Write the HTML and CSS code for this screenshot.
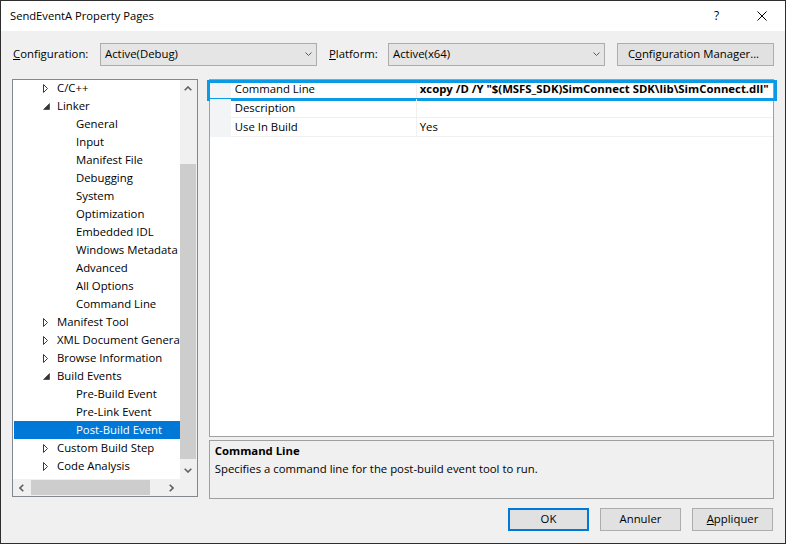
FILE: index.html
```html
<!DOCTYPE html>
<html>
<head>
<meta charset="utf-8">
<title>SendEventA Property Pages</title>
<link rel="stylesheet" href="styles.css">
</head>
<body>
<div class="window">
  <div class="titlebar">
    <span class="title">SendEventA Property Pages</span>
    <span class="tb-btn help">?</span>
    <span class="tb-btn"><svg width="10" height="10" viewBox="0 0 10 10"><path d="M0.5 0.5 L9.5 9.5 M9.5 0.5 L0.5 9.5" stroke="#000" stroke-width="1" fill="none"/></svg></span>
  </div>
  <div class="body">
    <div class="toolbar">
      <span class="lbl lbl-config"><u>C</u>onfiguration:</span>
      <div class="combo"><span>Active(Debug)</span><svg class="chev" width="7" height="4" viewBox="0 0 7 4"><polyline points="0.5,0.5 3.5,3.5 6.5,0.5" fill="none" stroke="#5a5a5a" stroke-width="1"/></svg></div>
      <span class="lbl lbl-platform"><u>P</u>latform:</span>
      <div class="combo"><span>Active(x64)</span><svg class="chev" width="7" height="4" viewBox="0 0 7 4"><polyline points="0.5,0.5 3.5,3.5 6.5,0.5" fill="none" stroke="#5a5a5a" stroke-width="1"/></svg></div>
      <button class="btn btn-cfg">C<u>o</u>nfiguration Manager...</button>
    </div>
    <div class="main">
      <div class="tree">
        <div class="tree-list">
          <div class="rows">
            <div class="trow l1"><span class="exp"><svg width="6" height="9" viewBox="0 0 6 9"><polygon points="0.5,0.5 4.5,4.5 0.5,8.5" fill="none" stroke="#3a3a3a" stroke-width="1"/></svg></span>C/C++</div>
            <div class="trow l1"><span class="exp"><svg width="7" height="7" viewBox="0 0 7 7"><polygon points="6.5,0.5 6.5,6.5 0.5,6.5" fill="#333" stroke="#333" stroke-width="0.6"/></svg></span>Linker</div>
            <div class="trow l2">General</div>
            <div class="trow l2">Input</div>
            <div class="trow l2">Manifest File</div>
            <div class="trow l2">Debugging</div>
            <div class="trow l2">System</div>
            <div class="trow l2">Optimization</div>
            <div class="trow l2">Embedded IDL</div>
            <div class="trow l2">Windows Metadata</div>
            <div class="trow l2">Advanced</div>
            <div class="trow l2">All Options</div>
            <div class="trow l2">Command Line</div>
            <div class="trow l1"><span class="exp"><svg width="6" height="9" viewBox="0 0 6 9"><polygon points="0.5,0.5 4.5,4.5 0.5,8.5" fill="none" stroke="#3a3a3a" stroke-width="1"/></svg></span>Manifest Tool</div>
            <div class="trow l1"><span class="exp"><svg width="6" height="9" viewBox="0 0 6 9"><polygon points="0.5,0.5 4.5,4.5 0.5,8.5" fill="none" stroke="#3a3a3a" stroke-width="1"/></svg></span>XML Document Generator</div>
            <div class="trow l1"><span class="exp"><svg width="6" height="9" viewBox="0 0 6 9"><polygon points="0.5,0.5 4.5,4.5 0.5,8.5" fill="none" stroke="#3a3a3a" stroke-width="1"/></svg></span>Browse Information</div>
            <div class="trow l1"><span class="exp"><svg width="7" height="7" viewBox="0 0 7 7"><polygon points="6.5,0.5 6.5,6.5 0.5,6.5" fill="#333" stroke="#333" stroke-width="0.6"/></svg></span>Build Events</div>
            <div class="trow l2">Pre-Build Event</div>
            <div class="trow l2">Pre-Link Event</div>
            <div class="trow l2 sel">Post-Build Event</div>
            <div class="trow l1"><span class="exp"><svg width="6" height="9" viewBox="0 0 6 9"><polygon points="0.5,0.5 4.5,4.5 0.5,8.5" fill="none" stroke="#3a3a3a" stroke-width="1"/></svg></span>Custom Build Step</div>
            <div class="trow l1"><span class="exp"><svg width="6" height="9" viewBox="0 0 6 9"><polygon points="0.5,0.5 4.5,4.5 0.5,8.5" fill="none" stroke="#3a3a3a" stroke-width="1"/></svg></span>Code Analysis</div>
          </div>
        </div>
        <div class="vscroll">
          <div class="sb-btn"><svg width="8" height="5" viewBox="0 0 8 5"><polyline points="0.7,4.3 4,1 7.3,4.3" fill="none" stroke="#606060" stroke-width="1.6"/></svg></div>
          <div class="vtrack"><div class="vthumb"></div></div>
          <div class="sb-btn"><svg width="8" height="5" viewBox="0 0 8 5"><polyline points="0.7,0.7 4,4 7.3,0.7" fill="none" stroke="#606060" stroke-width="1.6"/></svg></div>
        </div>
        <div class="hscroll">
          <div class="sb-btn"><svg width="5" height="8" viewBox="0 0 5 8"><polyline points="4.3,0.7 1,4 4.3,7.3" fill="none" stroke="#606060" stroke-width="1.6"/></svg></div>
          <div class="htrack"><div class="hthumb"></div></div>
          <div class="sb-btn"><svg width="5" height="8" viewBox="0 0 5 8"><polyline points="0.7,0.7 4,4 0.7,7.3" fill="none" stroke="#606060" stroke-width="1.6"/></svg></div>
        </div>
        <div class="corner"></div>
      </div>
      <div class="right">
        <div class="grid">
          <div class="prow">
            <div class="gutter"></div>
            <div class="pname">Command Line</div>
            <div class="pval bold">xcopy /D /Y "$(MSFS_SDK)SimConnect SDK\lib\SimConnect.dll"</div>
            <div class="focus-ring"></div>
          </div>
          <div class="prow">
            <div class="gutter"></div>
            <div class="pname">Description</div>
            <div class="pval"></div>
          </div>
          <div class="prow">
            <div class="gutter"></div>
            <div class="pname">Use In Build</div>
            <div class="pval">Yes</div>
          </div>
        </div>
        <div class="desc">
          <div class="desc-title">Command Line</div>
          <div class="desc-text">Specifies a command line for the post-build event tool to run.</div>
        </div>
      </div>
    </div>
    <div class="footer">
      <button class="btn btn-dlg btn-default">OK</button>
      <button class="btn btn-dlg">Annuler</button>
      <button class="btn btn-dlg"><u>A</u>ppliquer</button>
    </div>
  </div>
</div>
</body>
</html>
```
FILE: styles.css
```css
html, body {
  margin: 0;
  padding: 0;
}
body {
  font-family: "Open Sans", "Noto Sans", sans-serif;
  font-size: 11.35px;
  color: #000;
  background: #f0f0f0;
}
.window {
  width: 786px;
  height: 544px;
  box-sizing: border-box;
  border: 1px solid #2e2e2e;
  display: flex;
  flex-direction: column;
  background: #f0f0f0;
  overflow: hidden;
}
.titlebar {
  height: 30px;
  flex-shrink: 0;
  background: #fff;
  display: flex;
  align-items: center;
}
.title {
  flex: 1;
  padding-left: 9px;
  font-size: 11.2px;
  line-height: 16px;
  padding-bottom: 1px;
}
.tb-btn {
  width: 46px;
  height: 30px;
  display: flex;
  align-items: center;
  justify-content: center;
}
.help {
  font-size: 12px;
  padding-bottom: 1px;
  padding-left: 1px;
  box-sizing: border-box;
}
.body {
  flex: 1;
  display: flex;
  flex-direction: column;
  padding: 12px 11px 0 11px;
}
.toolbar {
  display: flex;
  height: 23px;
  flex-shrink: 0;
}
.lbl {
  display: flex;
  align-items: center;
  padding-left: 1px;
  padding-bottom: 2px;
  box-sizing: border-box;
}
.lbl-config {
  width: 88px;
}
.lbl-platform {
  width: 60px;
  margin-left: 11px;
}
.combo {
  width: 217px;
  box-sizing: border-box;
  border: 1px solid #acacac;
  background: #e5e5e5;
  display: flex;
  align-items: center;
  padding-left: 4px;
  padding-bottom: 2px;
}
.chev {
  margin-left: auto;
  margin-right: 4px;
}
.btn {
  font: inherit;
  color: #000;
  box-sizing: border-box;
  border: 1px solid #adadad;
  background: #e1e1e1;
  padding: 0 0 2px 0;
  height: 23px;
  margin: 0;
}
.btn-cfg {
  width: 157px;
  margin-left: 12px;
  padding-right: 4px;
}
.main {
  display: flex;
  gap: 11px;
  margin-top: 13px;
  height: 420px;
  flex-shrink: 0;
}
.tree {
  width: 186px;
  height: 418px;
  box-sizing: border-box;
  border: 1px solid #828790;
  background: #fff;
  display: grid;
  grid-template-columns: 1fr 17px;
  grid-template-rows: 1fr 17px;
}
.tree-list {
  overflow: hidden;
  padding-left: 1px;
  min-width: 0;
}
.rows {
  margin-top: -1px;
}
.trow {
  height: 18px;
  box-sizing: border-box;
  padding-bottom: 2px;
  display: flex;
  align-items: center;
  white-space: nowrap;
  overflow: hidden;
}
.trow.l1 {
  padding-left: 29px;
}
.trow.l2 {
  padding-left: 62px;
}
.exp {
  width: 14px;
  flex-shrink: 0;
  display: flex;
  align-items: center;
  padding-top: 2px;
}
.trow.sel {
  background: #0078d7;
  color: #fff;
}
.vscroll {
  background: #f0f0f0;
  display: flex;
  flex-direction: column;
}
.sb-btn {
  width: 17px;
  height: 17px;
  flex-shrink: 0;
  display: flex;
  align-items: center;
  justify-content: center;
}
.vtrack {
  flex: 1;
  padding-top: 67px;
}
.vthumb {
  height: 295px;
  margin: 0 1px 0 0;
  background: #cdcdcd;
}
.hscroll {
  background: #f0f0f0;
  display: flex;
}
.htrack {
  flex: 1;
  padding-left: 1px;
  display: flex;
  align-items: center;
}
.hthumb {
  width: 119px;
  height: 15px;
  background: #cdcdcd;
}
.corner {
  background: #f0f0f0;
}
.right {
  width: 566px;
  display: flex;
  flex-direction: column;
}
.grid {
  height: 358px;
  box-sizing: border-box;
  border: 1px solid #a0a0a0;
  background: #fff;
}
.prow {
  display: flex;
  height: 19px;
  position: relative;
  white-space: nowrap;
}
.gutter {
  width: 21px;
  flex-shrink: 0;
  background: #f3f4f6;
}
.pname {
  width: 186px;
  flex-shrink: 0;
  box-sizing: border-box;
  padding-left: 4px;
  padding-bottom: 2px;
  border-right: 1px solid #f0f0f0;
  border-bottom: 1px solid #f0f0f0;
  display: flex;
  align-items: center;
}
.pval {
  flex: 1;
  min-width: 0;
  overflow: hidden;
  padding-left: 3px;
  padding-bottom: 2px;
  border-bottom: 1px solid #f0f0f0;
  display: flex;
  align-items: center;
}
.bold {
  font-weight: 700;
}
.focus-ring {
  position: absolute;
  top: 0;
  left: -3px;
  right: -4px;
  height: 21px;
  box-sizing: border-box;
  border: 3px solid #0a9ae6;
  pointer-events: none;
}
.desc {
  margin-top: 3px;
  height: 59px;
  box-sizing: border-box;
  border: 1px solid #a0a0a0;
  background: #f0f0f0;
  padding: 1px 5px;
}
.desc-title {
  font-weight: 700;
  line-height: 17px;
}
.desc-text {
  margin-top: 1px;
  line-height: 17px;
}
.footer {
  display: flex;
  justify-content: flex-end;
  gap: 11px;
  margin-top: 9px;
  padding-right: 1px;
}
.btn-dlg {
  width: 81px;
}
.btn-default {
  border: 2px solid #0078d7;
}
```
